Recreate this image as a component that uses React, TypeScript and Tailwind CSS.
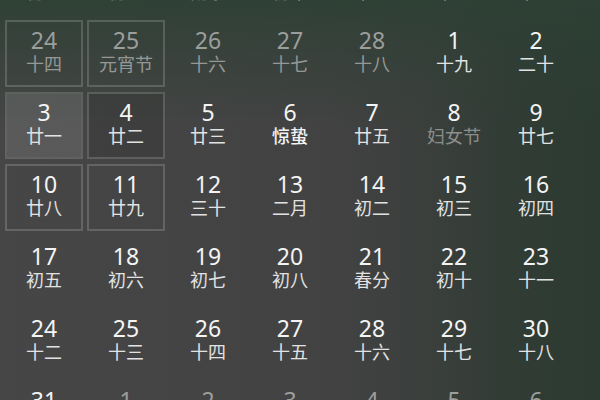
import React from "react";

type Day = {
  n: number;
  lunar: string;
  dim?: boolean; // other month
  festival?: boolean;
  term?: boolean;
  look?: "box" | "hover" | "boxDark";
};

const rows: Day[][] = [
  [
    { n: 17, lunar: "初七", dim: true },
    { n: 18, lunar: "初八", dim: true },
    { n: 19, lunar: "雨水", dim: true },
    { n: 20, lunar: "初十", dim: true },
    { n: 21, lunar: "十一", dim: true },
    { n: 22, lunar: "十二", dim: true },
    { n: 23, lunar: "十三", dim: true },
  ],
  [
    { n: 24, lunar: "十四", dim: true, look: "box" },
    { n: 25, lunar: "元宵节", dim: true, look: "box" },
    { n: 26, lunar: "十六", dim: true },
    { n: 27, lunar: "十七", dim: true },
    { n: 28, lunar: "十八", dim: true },
    { n: 1, lunar: "十九" },
    { n: 2, lunar: "二十" },
  ],
  [
    { n: 3, lunar: "廿一", look: "hover" },
    { n: 4, lunar: "廿二", look: "boxDark" },
    { n: 5, lunar: "廿三" },
    { n: 6, lunar: "惊蛰", term: true },
    { n: 7, lunar: "廿五" },
    { n: 8, lunar: "妇女节", festival: true },
    { n: 9, lunar: "廿七" },
  ],
  [
    { n: 10, lunar: "廿八", look: "box" },
    { n: 11, lunar: "廿九", look: "box" },
    { n: 12, lunar: "三十" },
    { n: 13, lunar: "二月" },
    { n: 14, lunar: "初二" },
    { n: 15, lunar: "初三" },
    { n: 16, lunar: "初四" },
  ],
  [
    { n: 17, lunar: "初五" },
    { n: 18, lunar: "初六" },
    { n: 19, lunar: "初七" },
    { n: 20, lunar: "初八" },
    { n: 21, lunar: "春分" },
    { n: 22, lunar: "初十" },
    { n: 23, lunar: "十一" },
  ],
  [
    { n: 24, lunar: "十二" },
    { n: 25, lunar: "十三" },
    { n: 26, lunar: "十四" },
    { n: 27, lunar: "十五" },
    { n: 28, lunar: "十六" },
    { n: 29, lunar: "十七" },
    { n: 30, lunar: "十八" },
  ],
  [
    { n: 31, lunar: "十九" },
    { n: 1, lunar: "二十", dim: true },
    { n: 2, lunar: "廿一", dim: true },
    { n: 3, lunar: "廿二", dim: true },
    { n: 4, lunar: "廿三", dim: true },
    { n: 5, lunar: "廿四", dim: true },
    { n: 6, lunar: "廿五", dim: true },
  ],
];

function Cell({ d }: { d: Day }) {
  let frame = "border-2 border-transparent";
  if (d.look === "box") frame = "border-2 border-white/[0.17]";
  if (d.look === "boxDark") frame = "border-2 border-white/[0.17] bg-black/[0.08]";
  if (d.look === "hover") frame = "border-2 border-white/[0.05] bg-white/[0.11]";

  const numColor = d.dim ? "text-[#9c9e9c]" : "text-[#f4f4f4]";
  let lunarColor = d.dim ? "text-[#969896]" : "text-[#e2e2e2]";
  if (d.festival) lunarColor = "text-[#8c8e8c]";
  if (d.term) lunarColor = "text-[#f2f2f2]";

  return (
    <div className={`flex flex-col items-center pt-[6px] ${frame}`}>
      <span className={`text-[23px] leading-[24px] ${numColor}`}>{d.n}</span>
      <span className={`mt-px text-[18px] leading-[22px] ${lunarColor} ${d.term ? "font-medium" : ""}`}>
        {d.lunar}
      </span>
    </div>
  );
}

export default function App() {
  return (
    <div
      className="w-[600px] h-[400px] overflow-hidden bg-[#444544] bg-[linear-gradient(to_bottom,rgba(46,64,53,0.95)_0%,rgba(46,64,53,0.55)_12%,rgba(46,64,53,0)_32%),linear-gradient(to_left,rgba(42,58,48,0.95)_0%,rgba(42,58,48,0.7)_14%,rgba(42,58,48,0.25)_30%,rgba(42,58,48,0)_45%),linear-gradient(to_right,#464646,#3f3f3f)]"
      style={{ fontFamily: '"Noto Sans", "Noto Sans CJK SC", sans-serif' }}
    >
      {/* first row is the tail of the previous week, scrolled mostly out of view */}
      <div className="mt-[-52px] pl-[5px] grid grid-cols-[repeat(7,78px)] auto-rows-[67px] gap-x-[4px] gap-y-[5px]">
        {rows.flat().map((d, i) => (
          <Cell key={i} d={d} />
        ))}
      </div>
    </div>
  );
}
